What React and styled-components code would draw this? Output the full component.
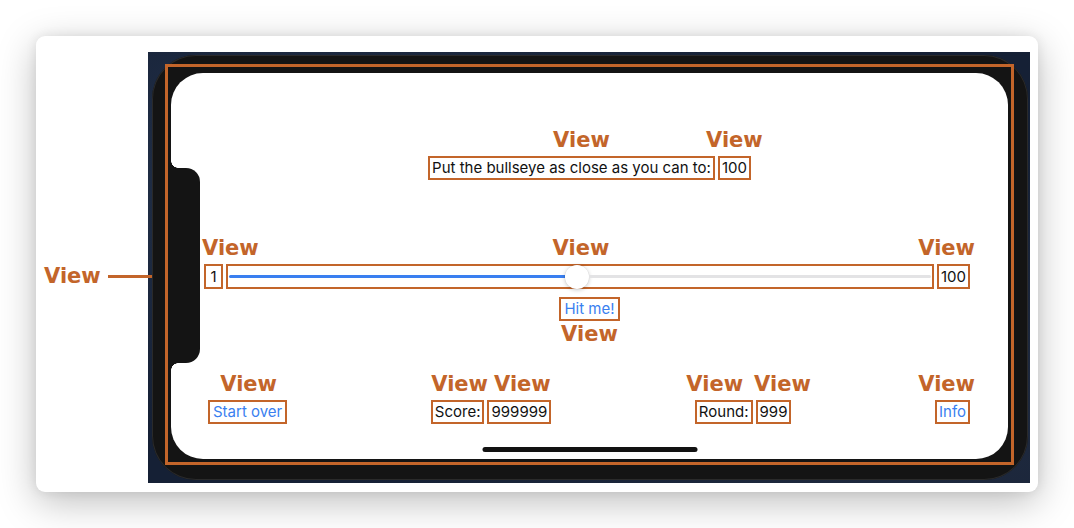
import React from 'react';
import styled, { createGlobalStyle } from 'styled-components';

const ORANGE = '#c3652a';
const BLUE = '#3a7ff0';
const INK = '#141414';

const GlobalStyle = createGlobalStyle`
  html, body { margin: 0; padding: 0; background: #ffffff; }
  body { font-family: Inter, "Liberation Sans", sans-serif; }
`;

const Page = styled.div`
  width: 1074px;
  height: 528px;
  box-sizing: border-box;
  padding: 36px;
  background: #ffffff;
  overflow: hidden;
`;

const Card = styled.div`
  position: relative;
  width: 1002px;
  height: 456px;
  box-sizing: border-box;
  padding: 16px 8px 9px 112px;
  background: #ffffff;
  border-radius: 9px;
  box-shadow: 0 10px 38px rgba(0, 0, 0, 0.26), 0 0 12px rgba(0, 0, 0, 0.08);
`;

const Photo = styled.div`
  width: 882px;
  height: 431px;
  box-sizing: border-box;
  padding: 3px 2px 3px 4px;
  background:
    radial-gradient(ellipse at 20% 30%, rgba(60, 80, 110, 0.35), transparent 60%),
    radial-gradient(ellipse at 85% 80%, rgba(50, 60, 80, 0.4), transparent 55%),
    #152035;
`;

const PhoneBody = styled.div`
  position: relative;
  height: 100%;
  box-sizing: border-box;
  padding: 18px 20px 21px 19px;
  background: ${INK};
  border-radius: 44px;
  box-shadow: inset 0 0 0 1px #2a2a2a;
`;

const Outline = styled.div`
  position: absolute;
  left: 13px;
  top: 9px;
  right: 14px;
  bottom: 15px;
  border: 3px solid ${ORANGE};
  pointer-events: none;
`;

const Screen = styled.div`
  position: relative;
  height: 100%;
  box-sizing: border-box;
  padding: 83px 0 35px 0;
  display: flex;
  flex-direction: column;
  background: #ffffff;
  border-radius: 32px;
`;

const Notch = styled.div`
  position: absolute;
  left: 0;
  top: 95px;
  width: 29px;
  height: 195px;
  background: ${INK};
  border-radius: 0 14px 14px 0;

  &::before,
  &::after {
    content: '';
    position: absolute;
    left: 0;
    width: 7px;
    height: 7px;
  }
  &::before {
    bottom: 100%;
    background: radial-gradient(circle at 100% 0, transparent 6.5px, ${INK} 7px);
  }
  &::after {
    top: 100%;
    background: radial-gradient(circle at 100% 100%, transparent 6.5px, ${INK} 7px);
  }
`;

const HomeBar = styled.div`
  position: absolute;
  left: 50%;
  bottom: 7px;
  width: 215px;
  height: 5px;
  transform: translateX(-50%);
  border-radius: 3px;
  background: #121212;
`;

const Row = styled.div`
  display: flex;
  align-items: center;
  justify-content: ${(p) => p.$justify || 'center'};
  gap: ${(p) => p.$gap ?? 3}px;
  margin-top: ${(p) => p.$mt || 0}px;
  padding: 0 ${(p) => p.$pr || 0}px 0 ${(p) => p.$pl || 0}px;
`;

const Group = styled.div`
  display: flex;
  gap: 3px;
`;

const Tag = styled.div`
  position: relative;
  display: flex;
  flex: ${(p) => (p.$grow ? 1 : '0 0 auto')};
`;

const Label = styled.span`
  position: absolute;
  ${(p) => (p.$below ? 'top: calc(100% + 3px);' : 'bottom: calc(100% + 5px);')}
  ${(p) =>
    p.$align === 'left'
      ? `left: ${p.$dx || 0}px;`
      : p.$align === 'right'
      ? `right: ${-(p.$dx || 0)}px;`
      : `left: 50%; transform: translateX(calc(-50% + ${p.$dx || 0}px));`}
  font-family: "DejaVu Sans", Verdana, sans-serif;
  font-weight: bold;
  font-size: 21px;
  line-height: 21px;
  color: ${ORANGE};
  white-space: nowrap;
`;

const Box = styled.div`
  box-sizing: border-box;
  height: ${(p) => p.$h || 24}px;
  min-width: ${(p) => p.$minw || 0}px;
  flex: ${(p) => (p.$grow ? 1 : '0 0 auto')};
  display: flex;
  align-items: center;
  justify-content: center;
  padding: 0 ${(p) => p.$px ?? 2}px;
  border: 2px solid ${ORANGE};
  font-size: 15px;
  line-height: 20px;
  color: ${(p) => (p.$link ? BLUE : '#111111')};
  white-space: nowrap;
`;

const Track = styled.div`
  flex: 1;
  display: flex;
  align-items: center;
  height: 100%;
`;

const Filled = styled.div`
  height: 3px;
  background: ${BLUE};
  border-radius: 2px 0 0 2px;
`;

const Thumb = styled.div`
  flex: 0 0 24px;
  height: 24px;
  border-radius: 50%;
  background: #ffffff;
  box-shadow: 0 1px 4px rgba(0, 0, 0, 0.22), 0 0 0 0.5px rgba(0, 0, 0, 0.06);
`;

const Rest = styled.div`
  flex: 1;
  height: 3px;
  background: #e3e3e5;
  border-radius: 0 2px 2px 0;
`;

const Callout = styled.div`
  position: absolute;
  left: 8px;
  top: 230px;
  height: 21px;
  display: flex;
  align-items: center;
  gap: 7px;
`;

const CalloutText = styled.span`
  font-family: "DejaVu Sans", Verdana, sans-serif;
  font-weight: bold;
  font-size: 21px;
  line-height: 21px;
  color: ${ORANGE};
`;

const CalloutLine = styled.div`
  width: 57px;
  height: 3px;
  background: ${ORANGE};
`;

function Tagged({ label = 'View', align, dx, below, grow, children }) {
  return (
    <Tag $grow={grow}>
      {children}
      <Label $align={align} $dx={dx} $below={below}>
        {label}
      </Label>
    </Tag>
  );
}

function Slider({ value, min, max }) {
  const frac = (value - min) / (max - min);
  return (
    <Track>
      <Filled style={{ width: `calc((100% - 24px) * ${frac})` }} />
      <Thumb />
      <Rest />
    </Track>
  );
}

export default function App() {
  return (
    <>
      <GlobalStyle />
      <Page>
        <Card>
          <Callout>
            <CalloutText>View</CalloutText>
            <CalloutLine />
          </Callout>
          <Photo>
            <PhoneBody>
              <Screen>
                <Row>
                  <Tagged dx={10}>
                    <Box>Put the bullseye as close as you can to:</Box>
                  </Tagged>
                  <Tagged>
                    <Box>100</Box>
                  </Tagged>
                </Row>

                <Row $mt={84} $pl={33} $pr={38}>
                  <Tagged align="left" dx={-2}>
                    <Box $h={25} $minw={19}>1</Box>
                  </Tagged>
                  <Tagged grow dx={1}>
                    <Box $h={25} $grow $px={1}>
                      <Slider value={50} min={1} max={100} />
                    </Box>
                  </Tagged>
                  <Tagged align="right" dx={5}>
                    <Box $h={25} $minw={31}>100</Box>
                  </Tagged>
                </Row>

                <Row $mt={8}>
                  <Tagged below>
                    <Box $link $px={3}>Hit me!</Box>
                  </Tagged>
                </Row>

                <Row $mt={79} $pl={37} $pr={38} $justify="space-between">
                  <Tagged dx={1}>
                    <Box $link $px={3}>Start over</Box>
                  </Tagged>
                  <Group>
                    <Tagged dx={2}>
                      <Box>Score:</Box>
                    </Tagged>
                    <Tagged dx={3}>
                      <Box>999999</Box>
                    </Tagged>
                  </Group>
                  <Group>
                    <Tagged dx={-9}>
                      <Box>Round:</Box>
                    </Tagged>
                    <Tagged dx={9}>
                      <Box>999</Box>
                    </Tagged>
                  </Group>
                  <Tagged align="right" dx={5}>
                    <Box $link>Info</Box>
                  </Tagged>
                </Row>

                <Notch />
                <HomeBar />
              </Screen>
              <Outline />
            </PhoneBody>
          </Photo>
        </Card>
      </Page>
    </>
  );
}
